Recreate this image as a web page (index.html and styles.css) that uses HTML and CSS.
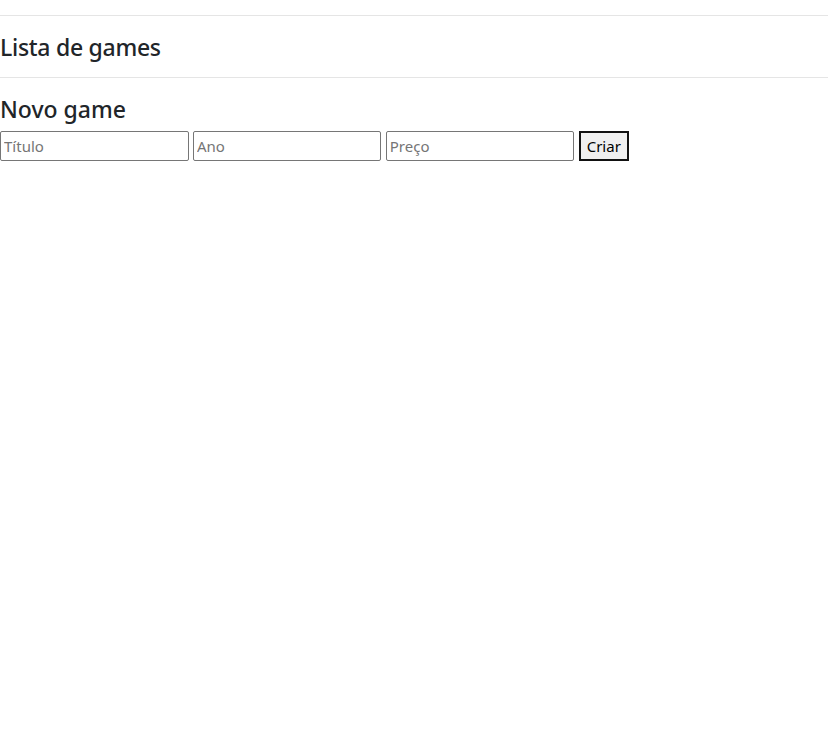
FILE: index.html
```html
<!DOCTYPE html>
<html lang="pt">
<head>
<meta charset="utf-8">
<title>Games</title>
<link rel="stylesheet" href="styles.css">
</head>
<body>
<hr class="rule rule-top">
<h2 class="title title-lista">Lista de games</h2>
<hr class="rule rule-mid">
<h2 class="title title-new">Novo game</h2>
<form class="game-form">
  <input class="field" type="text" placeholder="Título">
  <input class="field" type="text" placeholder="Ano">
  <input class="field" type="text" placeholder="Preço">
  <button class="btn" type="button">Criar</button>
</form>
</body>
</html>
```
FILE: styles.css
```css
html, body {
  margin: 0;
  padding: 0;
  background: #fff;
}
body {
  font-family: "Noto Sans", "Open Sans", sans-serif;
  color: #212529;
}
.rule {
  border: 0;
  border-top: 1px solid #e5e5e5;
  margin: 0;
  height: 0;
}
.rule-top {
  margin-top: 15px;
}
.title {
  margin: 0;
  font-size: 23px;
  font-weight: 500;
  line-height: 1.2;
  padding: 18px 0 15px;
}
.title-lista {
  letter-spacing: -0.28px;
}
.title-new {
  padding: 18px 0 8px;
}
.game-form {
  display: flex;
  gap: 4.4px;
  align-items: stretch;
}
.field {
  box-sizing: border-box;
  width: 188.5px;
  height: 30px;
  margin: 0;
  padding: 1px 3px;
  border: 1px solid #767676;
  border-radius: 2px;
  font-family: "Noto Sans", "Open Sans", sans-serif;
  font-size: 15px;
  color: #212529;
}
.field::placeholder {
  color: #757575;
}
.btn {
  box-sizing: border-box;
  height: 30px;
  padding: 1px 6px;
  border: 2px solid #111;
  background: #efefef;
  font-family: "Noto Sans", "Open Sans", sans-serif;
  font-size: 15px;
  color: #000;
}
```
